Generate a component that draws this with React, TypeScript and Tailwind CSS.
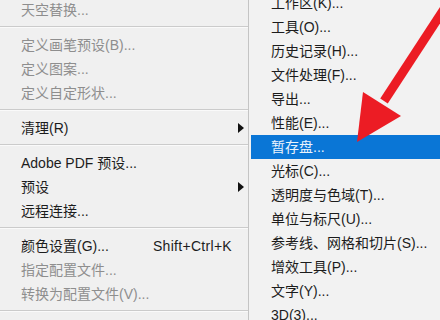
import React from 'react';

type Item =
  | { kind: 'sep' }
  | { kind: 'item'; label: string; disabled?: boolean; submenu?: boolean; shortcut?: string };

const leftItems: Item[] = [
  { kind: 'item', label: '天空替换...', disabled: true },
  { kind: 'sep' },
  { kind: 'item', label: '定义画笔预设(B)...', disabled: true },
  { kind: 'item', label: '定义图案...', disabled: true },
  { kind: 'item', label: '定义自定形状...', disabled: true },
  { kind: 'sep' },
  { kind: 'item', label: '清理(R)', submenu: true },
  { kind: 'sep' },
  { kind: 'item', label: 'Adobe PDF 预设...' },
  { kind: 'item', label: '预设', submenu: true },
  { kind: 'item', label: '远程连接...' },
  { kind: 'sep' },
  { kind: 'item', label: '颜色设置(G)...', shortcut: 'Shift+Ctrl+K' },
  { kind: 'item', label: '指定配置文件...', disabled: true },
  { kind: 'item', label: '转换为配置文件(V)...', disabled: true },
  { kind: 'sep' },
];

const rightItems = [
  '工作区(K)...',
  '工具(O)...',
  '历史记录(H)...',
  '文件处理(F)...',
  '导出...',
  '性能(E)...',
  '暂存盘...',
  '光标(C)...',
  '透明度与色域(T)...',
  '单位与标尺(U)...',
  '参考线、网格和切片(S)...',
  '增效工具(P)...',
  '文字(Y)...',
  '3D(3)...',
];

// Latin glyphs from an Arial-width face, CJK from Noto
const font = { fontFamily: '"Liberation Sans", "Noto Sans CJK SC", sans-serif' };

const SubArrow = () => (
  <svg width="6" height="10" viewBox="0 0 6 10" className="shrink-0">
    <path d="M0 0 L6 5 L0 10 Z" fill="#111" />
  </svg>
);

export default function App() {
  return (
    <div
      className="relative flex h-[320px] w-[440px] overflow-hidden bg-[#f0f0f0] text-[14px] leading-[24px]"
      style={font}
    >
      {/* Main menu */}
      <div className="flex w-[249px] flex-col border-r border-[#c4c4c4]">
        <div className="mt-[-2px]">
          {leftItems.map((it, i) =>
            it.kind === 'sep' ? (
              <div key={i} className="h-[11px] pt-[4px]">
                <div className="h-px bg-[#cbcbcb]" />
                <div className="h-px bg-[#fafafa]" />
              </div>
            ) : (
              <div
                key={i}
                className={`flex h-6 items-center justify-between pl-[21px] pr-[4px] ${
                  it.disabled ? 'text-[#8e8e8e]' : 'text-[#1c1c1c]'
                }`}
              >
                <span>{it.label}</span>
                {it.submenu && <SubArrow />}
                {it.shortcut && (
                  <span className="pr-[12px] tracking-[0.3px]">{it.shortcut}</span>
                )}
              </div>
            )
          )}
        </div>
      </div>

      {/* Preferences submenu */}
      <div className="flex flex-1 flex-col bg-[#f2f2f2] pl-[2px]">
        <div className="mt-[-9px]">
          {rightItems.map((label) => {
            const active = label === '暂存盘...';
            return (
              <div
                key={label}
                className={`flex h-6 items-center pl-[20px] ${
                  active ? 'bg-[#0a76d6] text-[#eaf3fc]' : 'text-[#1c1c1c]'
                }`}
              >
                {label}
              </div>
            );
          })}
        </div>
      </div>

      {/* Red annotation arrow */}
      <svg
        className="pointer-events-none absolute left-0 top-0"
        width="440"
        height="320"
        viewBox="0 0 440 320"
      >
        <line x1="446" y1="6" x2="384" y2="101" stroke="#ec1c24" strokeWidth="9" />
        <polygon points="357,142 363,92 401,116" fill="#ec1c24" />
      </svg>
    </div>
  );
}
